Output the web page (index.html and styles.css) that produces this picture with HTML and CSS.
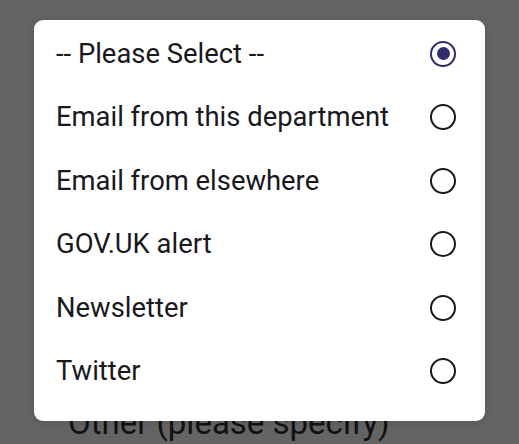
FILE: index.html
```html
<!DOCTYPE html>
<html>
<head>
<meta charset="utf-8">
<link rel="stylesheet" href="styles.css">
</head>
<body>
<div class="page">
  <div class="behind">Other (please specify)</div>
</div>
<div class="dialog" role="radiogroup">
  <div class="row"><span class="label">-- Please Select --</span><span class="radio checked"></span></div>
  <div class="row"><span class="label">Email from this department</span><span class="radio"></span></div>
  <div class="row"><span class="label">Email from elsewhere</span><span class="radio"></span></div>
  <div class="row"><span class="label">GOV.UK alert</span><span class="radio"></span></div>
  <div class="row"><span class="label">Newsletter</span><span class="radio"></span></div>
  <div class="row"><span class="label">Twitter</span><span class="radio"></span></div>
</div>
</body>
</html>
```
FILE: styles.css
```css
html, body {
  margin: 0;
  padding: 0;
  width: 519px;
  height: 444px;
  overflow: hidden;
  background: #646464;
  font-family: Roboto, "Noto Sans", sans-serif;
}
.page {
  padding: 403px 0 0 68px;
}
.behind {
  font-size: 33px;
  line-height: 40px;
  color: #121212;
  white-space: nowrap;
}
.dialog {
  position: absolute;
  left: 34px;
  top: 20px;
  width: 451px;
  height: 401px;
  box-sizing: border-box;
  background: #fff;
  border-radius: 9px;
  box-shadow: 0 2px 10px rgba(0, 0, 0, 0.12);
  display: flex;
  flex-direction: column;
  padding: 2px 0 18px 0;
}
.row {
  height: 63.6px;
  display: flex;
  align-items: center;
  justify-content: space-between;
  padding: 0 29px 0 22px;
}
.label {
  font-size: 27.4px;
  color: #19181c;
  white-space: nowrap;
}
.radio {
  width: 26px;
  height: 26px;
  box-sizing: border-box;
  border: 2.6px solid #1a1a1a;
  border-radius: 50%;
  display: flex;
  align-items: center;
  justify-content: center;
}
.radio.checked {
  border-color: #302b6e;
}
.radio.checked::after {
  content: "";
  width: 13px;
  height: 13px;
  border-radius: 50%;
  background: #302b6e;
}
```
